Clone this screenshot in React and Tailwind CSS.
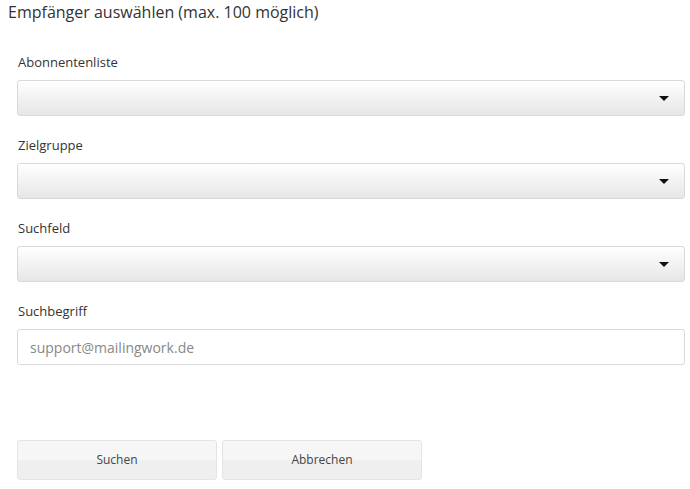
import React from 'react';

const font = { fontFamily: '"Open Sans", "Liberation Sans", sans-serif' };

const SelectField = ({ label }) => (
    <div className="flex flex-col">
        <label className="text-[13px] text-[#333] leading-[18px] mb-[9px] pl-[1px]">{label}</label>
        <div className="relative h-[36px] rounded-[3px] border border-[#d9d9d9] bg-gradient-to-b from-white to-[#e6e6e6]">
            <span className="absolute right-[15px] top-[15px] w-0 h-0 border-l-[5px] border-r-[5px] border-t-[5px] border-l-transparent border-r-transparent border-t-[#111]" />
        </div>
    </div>
);

const FormButton = ({ children }) => (
    <button className="w-[200px] h-[40px] rounded-[3px] border border-[#e4e4e4] bg-[linear-gradient(to_bottom,#f6f6f6_0%,#f6f6f6_48%,#efefef_52%,#efefef_100%)] text-[12px] text-[#444]">
        {children}
    </button>
);

export default function App() {
    return (
        <div className="w-[690px] h-[489px] bg-white" style={font}>
            <h1 className="pl-[8px] text-[16px] leading-[24px] text-[#333]">Empfänger auswählen (max. 100 möglich)</h1>
            <div className="pl-[17px] pr-[5px] mt-[29px] flex flex-col gap-[20px]">
                <SelectField label="Abonnentenliste" />
                <SelectField label="Zielgruppe" />
                <SelectField label="Suchfeld" />
                <div className="flex flex-col">
                    <label className="text-[13px] text-[#333] leading-[18px] mb-[9px] pl-[1px]">Suchbegriff</label>
                    <input
                        className="h-[36px] rounded-[3px] border border-[#d9d9d9] px-[12px] text-[14px] text-[#555] placeholder:text-[#888] outline-none"
                        placeholder="support@mailingwork.de"
                    />
                </div>
            </div>
            <div className="pl-[17px] mt-[75px] flex gap-[5px]">
                <FormButton>Suchen</FormButton>
                <FormButton>Abbrechen</FormButton>
            </div>
        </div>
    );
}
